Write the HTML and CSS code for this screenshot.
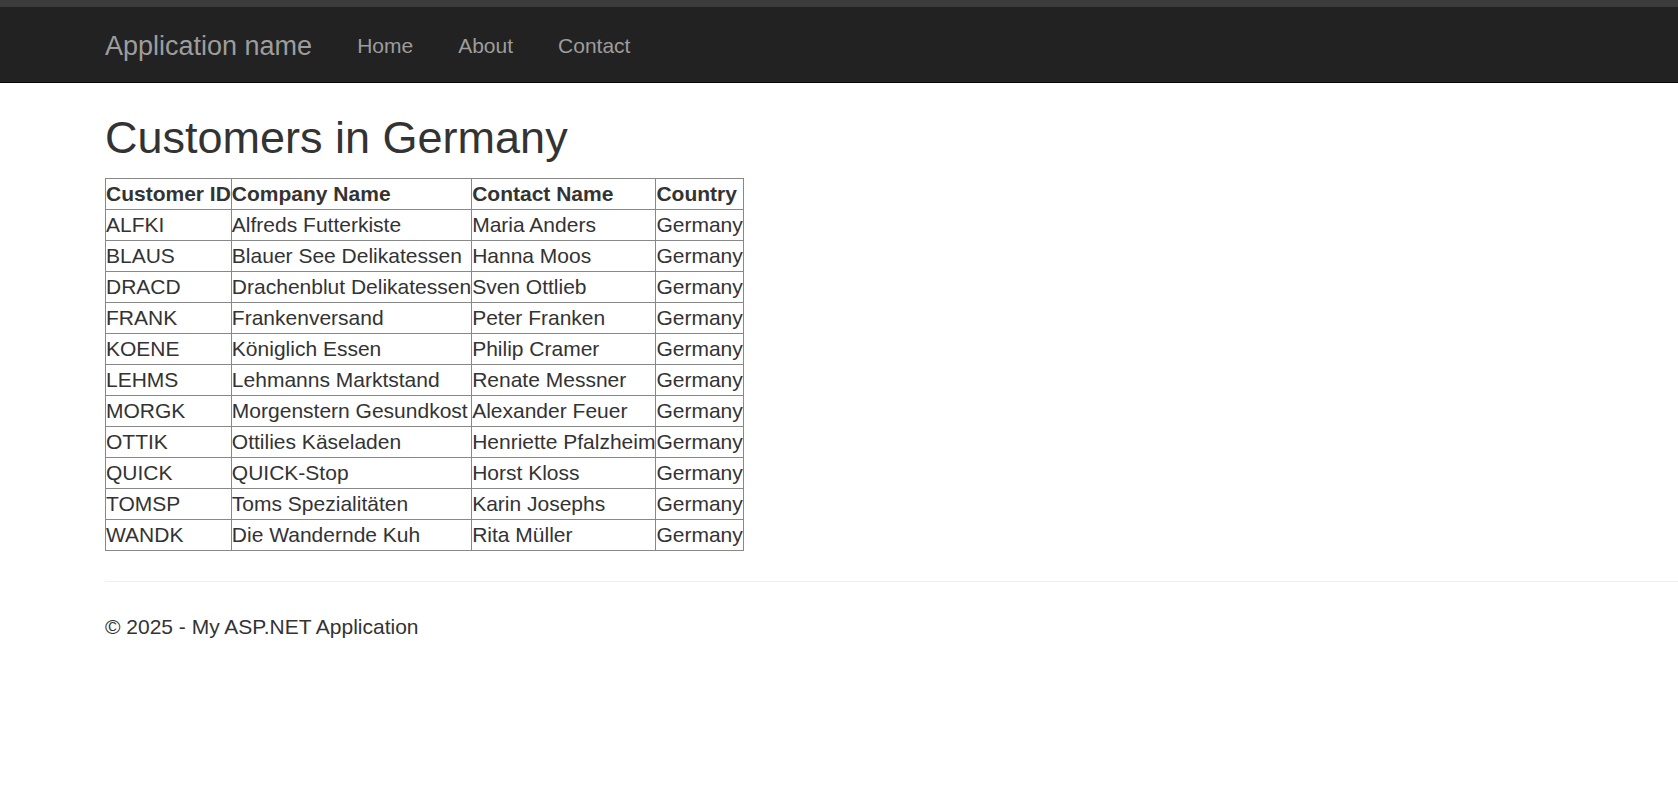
FILE: index.html
```html
<!DOCTYPE html>
<html lang="en">
<head>
<meta charset="utf-8">
<title>Customers in Germany</title>
<link rel="stylesheet" href="styles.css">
</head>
<body>
<div class="topstrip"></div>
<nav class="navbar">
  <a class="brand" href="#">Application name</a>
  <ul class="nav">
    <li><a href="#">Home</a></li>
    <li><a href="#">About</a></li>
    <li><a href="#">Contact</a></li>
  </ul>
</nav>
<main class="body-content">
  <h2 class="title">Customers in Germany</h2>
  <table class="grid">
    <thead>
      <tr><th>Customer ID</th><th>Company Name</th><th>Contact Name</th><th>Country</th></tr>
    </thead>
    <tbody>
      <tr><td>ALFKI</td><td>Alfreds Futterkiste</td><td>Maria Anders</td><td>Germany</td></tr>
      <tr><td>BLAUS</td><td>Blauer See Delikatessen</td><td>Hanna Moos</td><td>Germany</td></tr>
      <tr><td>DRACD</td><td>Drachenblut Delikatessen</td><td>Sven Ottlieb</td><td>Germany</td></tr>
      <tr><td>FRANK</td><td>Frankenversand</td><td>Peter Franken</td><td>Germany</td></tr>
      <tr><td>KOENE</td><td>Königlich Essen</td><td>Philip Cramer</td><td>Germany</td></tr>
      <tr><td>LEHMS</td><td>Lehmanns Marktstand</td><td>Renate Messner</td><td>Germany</td></tr>
      <tr><td>MORGK</td><td>Morgenstern Gesundkost</td><td>Alexander Feuer</td><td>Germany</td></tr>
      <tr><td>OTTIK</td><td>Ottilies Käseladen</td><td>Henriette Pfalzheim</td><td>Germany</td></tr>
      <tr><td>QUICK</td><td>QUICK-Stop</td><td>Horst Kloss</td><td>Germany</td></tr>
      <tr><td>TOMSP</td><td>Toms Spezialitäten</td><td>Karin Josephs</td><td>Germany</td></tr>
      <tr><td>WANDK</td><td>Die Wandernde Kuh</td><td>Rita Müller</td><td>Germany</td></tr>
    </tbody>
  </table>
  <hr class="rule">
  <footer class="footer">
    <p>© 2025 - My ASP.NET Application</p>
  </footer>
</main>
</body>
</html>
```

FILE: styles.css
```css
html, body {
  margin: 0;
  padding: 0;
}
body {
  font-family: "Liberation Sans", Arial, sans-serif;
  font-size: 21px;
  line-height: 30px;
  color: #333;
  background: #fff;
}
.topstrip {
  height: 7px;
  background: #3c3c3c;
}
.navbar {
  height: 75px;
  background: #222;
  border-bottom: 1px solid #080808;
  display: flex;
  align-items: center;
  padding-left: 105px;
  box-sizing: content-box;
}
.brand {
  font-size: 27px;
  line-height: 30px;
  color: #9d9d9d;
  text-decoration: none;
  padding: 2px 22.5px 0 0;
}
.nav {
  display: flex;
  list-style: none;
  margin: 0;
  padding: 2px 0 0 0;
}
.nav a {
  display: block;
  padding: 0 22.5px;
  color: #9d9d9d;
  text-decoration: none;
  font-size: 21px;
  line-height: 30px;
}
.body-content {
  padding-left: 105px;
}
.title {
  font-size: 45px;
  font-weight: 500;
  line-height: 49.5px;
  margin: 30px 0 15px 0;
}
.grid {
  border-collapse: collapse;
  border: 1px solid #888;
}
.grid th, .grid td {
  border: 1px solid #888;
  padding: 0;
  height: 30px;
  line-height: 30px;
  text-align: left;
  white-space: nowrap;
  vertical-align: middle;
}
.grid th {
  font-weight: bold;
}
.rule {
  border: 0;
  border-top: 1px solid #eee;
  margin: 30px 0 30px 0;
  height: 0;
}
.footer p {
  margin: 0;
}
```
